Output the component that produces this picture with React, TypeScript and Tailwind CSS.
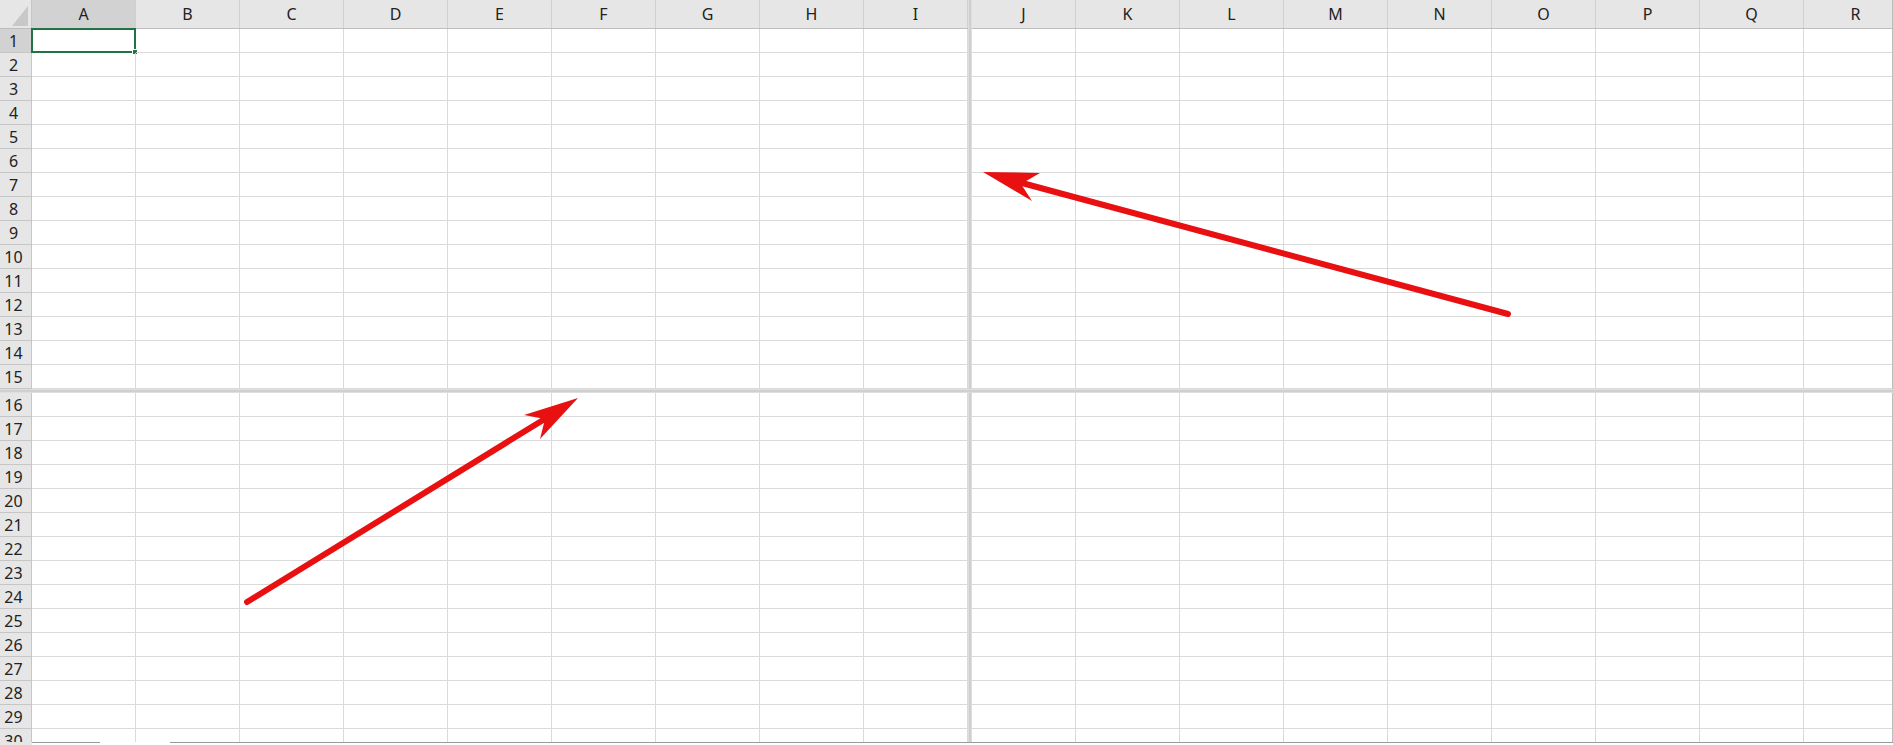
import React from 'react';

const LEFT_COLS = ['A', 'B', 'C', 'D', 'E', 'F', 'G', 'H', 'I'];
const RIGHT_COLS = ['J', 'K', 'L', 'M', 'N', 'O', 'P', 'Q', 'R'];
const TOP_ROWS = Array.from({ length: 15 }, (_, i) => i + 1);
const BOTTOM_ROWS = Array.from({ length: 15 }, (_, i) => i + 16);

type PaneProps = {
  cols: string[];
  rows: number[];
  header?: boolean;
  rowHeads?: boolean;
};

const Corner = () => (
  <div className="w-[32px] h-full shrink-0 bg-[#e6e6e6] border-r border-[#c6c6c6] flex items-end justify-end pr-[3px] pb-[2px]">
    <svg width="16" height="20" viewBox="0 0 16 20">
      <polygon points="16,0 16,20 0,20" fill="#c8c8c8" />
    </svg>
  </div>
);

const Pane = ({ cols, rows, header, rowHeads }: PaneProps) => (
  <div className="flex flex-col">
    {header && (
      <div className="flex h-[29px] shrink-0 bg-[#e6e6e6] border-b border-[#bdbdbd]">
        {rowHeads && <Corner />}
        {cols.map((c) => (
          <div
            key={c}
            className={`w-[104px] shrink-0 flex items-center justify-center border-r border-[#d0d0d0] text-[16px] text-[#222] ${
              c === 'A' ? 'bg-[#d2d2d2]' : ''
            }`}
          >
            {c}
          </div>
        ))}
      </div>
    )}
    {rows.map((r) => (
      <div key={r} className="flex h-[24px] shrink-0">
        {rowHeads && (
          <div
            className={`w-[32px] shrink-0 flex items-center justify-center pr-[4px] border-r border-b border-[#c6c6c6] text-[16px] text-[#222] leading-none ${
              r === 1 ? 'bg-[#d2d2d2]' : 'bg-[#e6e6e6]'
            }`}
          >
            {r}
          </div>
        )}
        {cols.map((c) => (
          <div key={c} className="w-[104px] shrink-0 border-r border-b border-[#dadada] relative">
            {r === 1 && c === 'A' && (
              <div className="absolute -top-px -left-px w-[105px] h-[25px] border-2 border-[#217346]">
                <div className="absolute -right-[4px] -bottom-[4px] w-[6px] h-[6px] bg-[#217346] border border-white" />
              </div>
            )}
          </div>
        ))}
      </div>
    ))}
  </div>
);

const Arrows = () => (
  <svg className="absolute inset-0 pointer-events-none" width="1893" height="745" viewBox="0 0 1893 745">
    {/* upper right arrow */}
    <line x1="1508" y1="314" x2="1022" y2="183" stroke="#e81010" strokeWidth="6" strokeLinecap="round" />
    <polygon points="983,172 1040,173 1021,184 1032,201" fill="#e81010" />
    {/* lower left arrow */}
    <line x1="247" y1="602" x2="548" y2="417" stroke="#e81010" strokeWidth="6" strokeLinecap="round" />
    <polygon points="578,398 540,439 545,419 524,415" fill="#e81010" />
  </svg>
);

export default function App() {
  return (
    <div className="relative w-[1893px] h-[745px] overflow-hidden bg-white flex flex-col font-['Noto_Sans','Liberation_Sans',sans-serif]">
      {/* top panes */}
      <div className="flex h-[389px] shrink-0 overflow-hidden">
        <Pane cols={LEFT_COLS} rows={TOP_ROWS} header rowHeads />
        <div className="w-[4px] shrink-0 bg-[#cfcfcf] border-x border-[#dedede]" />
        <div className="flex-1 overflow-hidden border-r border-[#bdbdbd]">
          <Pane cols={RIGHT_COLS} rows={TOP_ROWS} header />
        </div>
      </div>

      {/* horizontal split */}
      <div className="h-[4px] shrink-0 bg-[#cfcfcf] border-y border-[#dedede]" />

      {/* bottom panes */}
      <div className="flex flex-1 overflow-hidden">
        <Pane cols={LEFT_COLS} rows={BOTTOM_ROWS} rowHeads />
        <div className="w-[4px] shrink-0 bg-[#cfcfcf] border-x border-[#dedede]" />
        <div className="flex-1 overflow-hidden border-r border-[#bdbdbd]">
          <Pane cols={RIGHT_COLS} rows={BOTTOM_ROWS} />
        </div>
      </div>

      {/* sheet tab strip edge */}
      <div className="flex h-[3px] shrink-0">
        <div className="w-[32px] bg-[#e6e6e6]" />
        <div className="w-[68px] border-t border-[#9a9a9a] bg-white" />
        <div className="w-[70px] bg-white" />
        <div className="flex-1 border-t border-[#9a9a9a] bg-white" />
      </div>

      <Arrows />
    </div>
  );
}
